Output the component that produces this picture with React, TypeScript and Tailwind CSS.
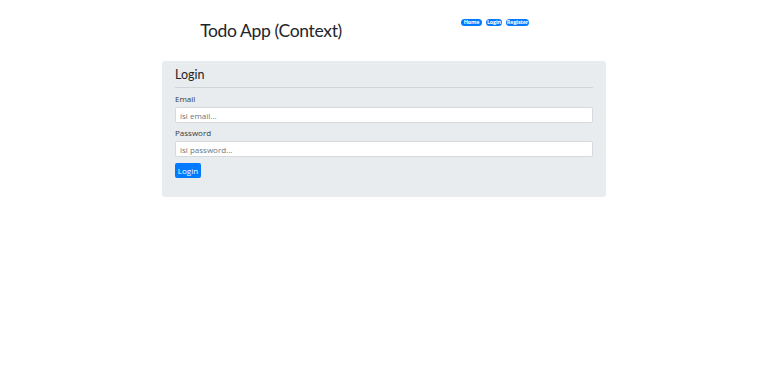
import React from "react";

const font = { fontFamily: "Lato, 'Noto Sans', sans-serif" };
const small = { fontFamily: "'Open Sans', 'Noto Sans', sans-serif" };

function Badge({ label, width }: { label: string; width: string }) {
  return (
    <span
      className={`${width} flex h-[7px] items-center justify-center rounded-full bg-[#007bff] text-[5.5px] leading-[7px] font-bold tracking-[-0.15px] text-white`}
      style={small}
    >
      {label}
    </span>
  );
}

export default function App() {
  return (
    <div className="min-h-screen bg-white text-[#212529]" style={font}>
      <div className="mx-auto w-[444px]">
        {/* Header */}
        <div className="flex items-start">
          <div className="w-1/2">
            <h1 className="mt-[20px] pr-[4px] text-center text-[17.5px] leading-[21px] font-normal tracking-[-0.35px]">
              Todo App (Context)
            </h1>
          </div>
          <div className="mt-[19px] flex w-1/2 justify-center gap-[4px]">
            <Badge label="Home" width="w-[21px]" />
            <Badge label="Login" width="w-[16px]" />
            <Badge label="Register" width="w-[23px]" />
          </div>
        </div>

        {/* Login card */}
        <div className="mt-[20px] rounded-[3px] bg-[#e9ecef] px-[13px] pt-[6px] pb-[19px]">
          <h3 className="text-[12.5px] leading-[15px] font-normal">Login</h3>
          <hr className="mt-[5px] border-0 border-t border-[#d2d5d8]" />

          <form className="mt-[5px] flex flex-col" style={small} onSubmit={(e) => e.preventDefault()}>
            <label className="mb-[2px] text-[8px] leading-[12px] text-[#343a40]">Email</label>
            <input
              type="email"
              placeholder="isi email..."
              className="h-[16px] rounded-[2px] border border-[#d6dade] bg-white px-[4px] text-[8px] outline-none placeholder:text-[#6c757d]"
            />

            <label className="mt-[4px] mb-[2px] text-[8px] leading-[12px] text-[#343a40]">Password</label>
            <input
              type="password"
              placeholder="isi password..."
              className="h-[16px] rounded-[2px] border border-[#d6dade] bg-white px-[4px] text-[8px] outline-none placeholder:text-[#6c757d]"
            />

            <div className="mt-[6px]">
              <button
                type="submit"
                className="flex h-[15px] w-[26px] items-center justify-center rounded-[2px] bg-[#007bff] text-[8px] leading-[15px] text-white"
              >
                Login
              </button>
            </div>
          </form>
        </div>
      </div>
    </div>
  );
}
